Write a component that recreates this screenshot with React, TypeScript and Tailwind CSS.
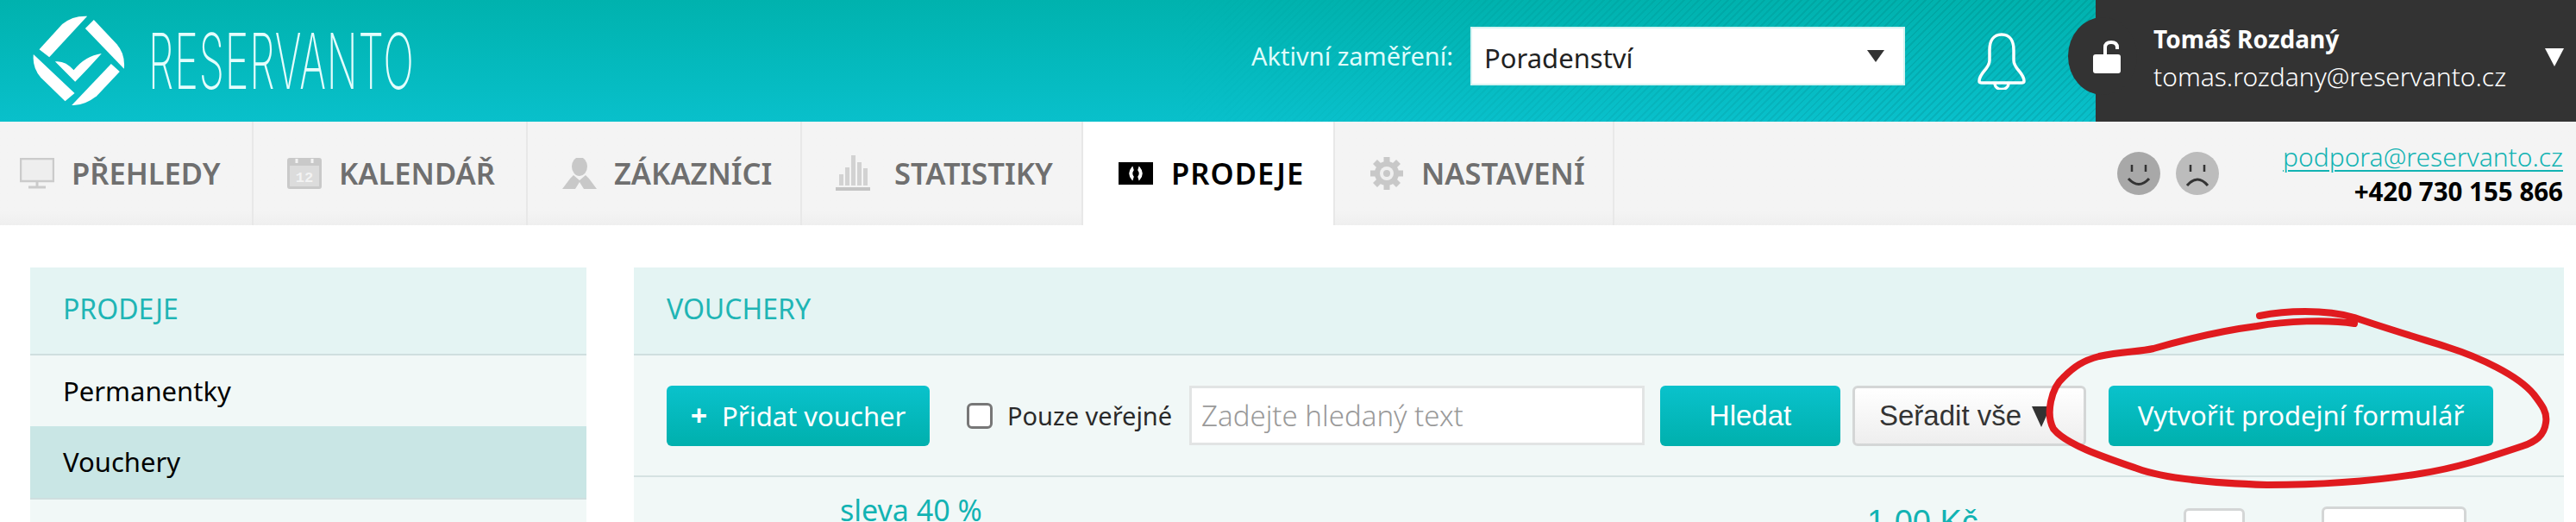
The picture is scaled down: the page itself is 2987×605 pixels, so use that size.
const ubuntu = "font-['Noto_Sans',sans-serif]";

function Logo() {
  return (
    <svg viewBox="113 40 320 315" className="w-[107px] h-[105px] shrink-0" fill="#fff">
      <path d="M135 158 L215 70 Q250 40 302 42 L170 185 Z" />
      <path d="M295 85 L325 55 L405 140 Q435 175 430 225 Z" />
      <path d="M385 208 L415 235 L335 320 Q290 355 248 352 Z" />
      <path d="M115 175 L258 310 L225 338 L140 255 Q110 220 115 175 Z" />
      <path d="M190 200 Q225 195 255 230 Q295 180 352 172 Q300 230 260 270 Z" />
    </svg>
  );
}

function MonitorIcon() {
  return (
    <svg viewBox="0 0 40 36" className="w-[40px] h-[36px]" fill="none">
      <rect x="1" y="1" width="38" height="26" fill="#eeeeee" stroke="#cbcbcb" strokeWidth="2.5" />
      <path d="M20 27v6M10 34h20" stroke="#cbcbcb" strokeWidth="3" />
    </svg>
  );
}

function CalendarIcon() {
  return (
    <svg viewBox="0 0 40 36" className="w-[40px] h-[36px]">
      <rect x="0" y="0" width="40" height="36" rx="3" fill="#c9c9c9" />
      <rect x="3" y="9" width="34" height="24" fill="#dcdcdc" />
      <path d="M11 1v5M29 1v5" stroke="#f3f3f3" strokeWidth="3" />
      <text x="20" y="28" textAnchor="middle" fontSize="17" fontWeight="700" fill="#f3f3f3" fontFamily="Liberation Mono, monospace">12</text>
    </svg>
  );
}

function PersonIcon() {
  return (
    <svg viewBox="0 0 40 36" className="w-[40px] h-[36px]" fill="#c8c8c8">
      <ellipse cx="20" cy="10" rx="9" ry="11" />
      <path d="M13 20 L20 26 L27 20 L31 24 L40 36 H25 L20 28 L15 36 H0 L9 24 Z" />
    </svg>
  );
}

function BarsIcon() {
  return (
    <svg viewBox="0 0 40 42" className="w-[40px] h-[42px]">
      <path d="M4 22h5v13H4zM11 14h5v21h-5zM18 0h5v35h-5zM25 8h5v27h-5zM32 15h5v20h-5z" fill="#d2d2d2" />
      <rect x="0" y="37" width="40" height="4" fill="#c4c4c4" />
    </svg>
  );
}

function MoneyIcon() {
  return (
    <svg viewBox="0 0 40 26" className="w-[40px] h-[26px]">
      <rect width="40" height="26" fill="#000" />
      <path d="M16 6 Q10 13 16 20 L17 17 Q14 13 17 9 Z M24 6 Q30 13 24 20 L23 17 Q26 13 23 9 Z" fill="#fff" stroke="#fff" strokeWidth="1.5" />
    </svg>
  );
}

function GearIcon() {
  return (
    <svg viewBox="0 0 40 40" className="w-[40px] h-[40px]">
      <g stroke="#c8c8c8" strokeWidth="7">
        <path d="M20 1v38M1 20h38M6.5 6.5l27 27M33.5 6.5l-27 27" />
      </g>
      <circle cx="20" cy="20" r="14" fill="#c8c8c8" />
      <circle cx="20" cy="20" r="8" fill="#efefef" />
      <circle cx="20" cy="20" r="4" fill="#c8c8c8" />
    </svg>
  );
}

const tabs = [
  { label: "PŘEHLEDY", icon: <MonitorIcon />, width: "w-[294px]", pad: "pl-[23px]", gap: "gap-[20px]" },
  { label: "KALENDÁŘ", icon: <CalendarIcon />, width: "w-[318px]", pad: "pl-[39px]", gap: "gap-[20px]" },
  { label: "ZÁKAZNÍCI", icon: <PersonIcon />, width: "w-[318px]", pad: "pl-[40px]", gap: "gap-[20px]" },
  { label: "STATISTIKY", icon: <BarsIcon />, width: "w-[326px]", pad: "pl-[39px]", gap: "gap-[28px]" },
  { label: "PRODEJE", icon: <MoneyIcon />, width: "w-[292px]", pad: "pl-[41px]", gap: "gap-[21px]", active: true },
  { label: "NASTAVENÍ", icon: <GearIcon />, width: "w-[324px]", pad: "pl-[40px]", gap: "gap-[20px]" },
];

function Header() {
  return (
    <header className="relative flex h-[141px] items-center bg-gradient-to-b from-[#00b2ae] to-[#09c0cb]">
      <div className="absolute inset-0 bg-[repeating-linear-gradient(135deg,rgba(0,0,0,0.07)_0px,rgba(0,0,0,0.07)_2px,transparent_2px,transparent_6px)] [mask-image:linear-gradient(to_right,transparent_45%,black_75%)]" />
      <div className="relative ml-[38px] flex items-center">
        <Logo />
        <div className="ml-[27px] h-[65px] w-[303px]">
          <span className="inline-block origin-top-left scale-x-[0.526] font-['Inter',sans-serif] text-[89px] leading-[65px] font-extralight tracking-[0.02em] whitespace-nowrap text-[#e4fdfc]">
            RESERVANTO
          </span>
        </div>
      </div>
      <div className="relative ml-auto flex h-full items-center">
        <div className="flex items-center pb-[11px]">
          <span className={`${ubuntu} mr-[20px] text-[29px] text-[#dffcfb] whitespace-nowrap`}>Aktivní zaměření:</span>
          <div className="flex h-[68px] w-[504px] items-center justify-between border-2 border-[#d6f3f2] bg-white pr-[22px] pl-[14px]">
            <span className={`${ubuntu} pt-[4px] text-[31px] text-[#222]`}>Poradenství</span>
            <span className="h-0 w-0 border-x-[10px] border-t-[14px] border-x-transparent border-t-[#333]" />
          </div>
        </div>
        <svg viewBox="0 0 58 66" className="mr-[80px] ml-[83px] h-[66px] w-[58px]" fill="none" stroke="#fff" strokeWidth="3.5">
          <path d="M29 2 C19 2 15 10 15 20 V32 C15 42 3 46 3 56 Q3 58 6 58 H52 Q55 58 55 56 C55 46 43 42 43 32 V20 C43 10 39 2 29 2 Z" />
          <path d="M21 58 C21 68 37 68 37 58" />
        </svg>
        <div className="relative flex h-full w-[557px] items-center bg-[#333333] pl-[67px]">
          <div className="absolute top-[20px] left-[-32px] h-[90px] w-[80px] rounded-[50%] bg-[#333333]" />
          <svg viewBox="0 0 32 38" className="absolute top-[47px] left-[-3px] h-[38px] w-[32px]" fill="none">
            <path d="M14 17 V8 Q14 2 21 2 Q28 2 28 8 V10" stroke="#fff" strokeWidth="4" />
            <rect x="0" y="16" width="32" height="22" rx="3" fill="#fff" />
          </svg>
          <div className={`${ubuntu} relative pb-[8px] text-white`}>
            <div className="text-[28px] leading-[40px] font-bold">Tomáš Rozdaný</div>
            <div className="mt-[4px] text-[30px] leading-[40px] font-light">tomas.rozdany@reservanto.cz</div>
          </div>
          <span className="absolute top-[56px] right-[14px] h-0 w-0 border-x-[11px] border-t-[21px] border-x-transparent border-t-white" />
        </div>
      </div>
    </header>
  );
}

function Nav() {
  return (
    <nav className="flex h-[120px] bg-gradient-to-b from-[#f4f4f4] from-85% to-[#efefef]">
      {tabs.map((tab) => (
        <div
          key={tab.label}
          className={`flex h-full items-center border-r-2 border-[#e8e8e8] ${tab.width} ${tab.pad} ${tab.gap} ${tab.active ? "bg-white" : ""}`}
        >
          <span className="flex w-[40px] shrink-0 justify-center">{tab.icon}</span>
          <span
            className={`${ubuntu} text-[34.5px] font-semibold whitespace-nowrap ${tab.active ? "tracking-[0.03em] text-black" : "text-[#6f6f6f]"}`}
          >
            {tab.label}
          </span>
        </div>
      ))}
      <div className="ml-auto flex items-center pr-[15px]">
        <svg viewBox="0 0 50 50" className="h-[50px] w-[50px]">
          <circle cx="25" cy="25" r="25" fill="#a8a8a8" />
          <path d="M17 15v8M33 15v8" stroke="#333" strokeWidth="2.5" />
          <path d="M13 31 Q25 44 37 31" fill="none" stroke="#333" strokeWidth="3" />
        </svg>
        <svg viewBox="0 0 50 50" className="mr-[74px] ml-[18px] h-[50px] w-[50px]">
          <circle cx="25" cy="25" r="25" fill="#bcbcbc" />
          <path d="M17 15v8M33 15v8" stroke="#333" strokeWidth="2.5" />
          <path d="M13 39 Q25 25 37 39" fill="none" stroke="#333" strokeWidth="3" />
        </svg>
        <div className={`${ubuntu} w-[325px] text-right`}>
          <div className="text-[30px] leading-[42px] font-light text-[#12b3b3] underline decoration-2 underline-offset-[4px]">
            podpora@reservanto.cz
          </div>
          <div className="text-[29.5px] leading-[38px] font-bold text-black">+420 730 155 866</div>
        </div>
      </div>
    </nav>
  );
}

function Sidebar() {
  return (
    <aside className="w-[645px] shrink-0 bg-[#f1f8f7]">
      <div className={`${ubuntu} flex h-[102px] items-center border-b-2 border-[#cfdfdf] bg-[#e4f4f3] pb-[4px] pl-[38px] text-[32px] text-[#1fb5b5]`}>
        PRODEJE
      </div>
      <div className={`${ubuntu} flex h-[82px] items-center pl-[38px] text-[31px] text-black`}>Permanentky</div>
      <div className={`${ubuntu} flex h-[85px] items-center border-b-2 border-[#cfdfdf] bg-[#c9e6e5] pl-[38px] text-[31px] text-black`}>
        Vouchery
      </div>
    </aside>
  );
}

function TealButton({ children, className }: { children: React.ReactNode; className: string }) {
  return (
    <button
      className={`${className} h-[70px] shrink-0 rounded-[6px] bg-gradient-to-b from-[#0ac2cc] to-[#00b0ad] whitespace-nowrap text-white`}
    >
      {children}
    </button>
  );
}

function Content() {
  return (
    <section className="relative ml-[55px] w-[2238px] shrink-0 bg-[#f1f8f7]">
      <div className={`${ubuntu} flex h-[102px] items-center border-b-2 border-[#cfdfdf] bg-[#e4f4f3] pb-[4px] pl-[38px] text-[32px] text-[#1fb5b5]`}>
        VOUCHERY
      </div>
      <div className="flex h-[141px] items-center border-b-2 border-[#d5e2e2] pl-[38px]">
        <TealButton className={`${ubuntu} w-[305px] text-[31px]`}>
          <span className="mr-[17px] text-[34px] font-bold">+</span>Přidat voucher
        </TealButton>
        <span className="ml-[43px] h-[30px] w-[30px] shrink-0 rounded-[6px] border-[3px] border-[#777] bg-white" />
        <span className={`${ubuntu} ml-[17px] w-[190px] text-[29px] whitespace-nowrap text-[#2a2a2a]`}>Pouze veřejné</span>
        <div className={`${ubuntu} ml-[21px] flex h-[69px] w-[528px] items-center border-[3px] border-[#e2e4e4] bg-white pl-[11px] text-[33px] font-light text-[#9a9a9a]`}>
          Zadejte hledaný text
        </div>
        <TealButton className="ml-[18px] w-[209px] font-['Liberation_Sans',sans-serif] text-[33px]">Hledat</TealButton>
        <div className="ml-[14px] flex h-[70px] w-[271px] shrink-0 items-center rounded-[6px] border-[3px] border-[#d4d6d6] bg-gradient-to-b from-white to-[#eeeeee] pl-[28px] font-['Liberation_Sans',sans-serif] text-[33px] whitespace-nowrap text-[#333]">
          Seřadit vše
          <span className="mt-[3px] ml-[12px] h-0 w-0 border-x-[11px] border-t-[24px] border-x-transparent border-t-[#333]" />
        </div>
        <TealButton className={`${ubuntu} ml-[26px] w-[446px] text-[31px]`}>Vytvořit prodejní formulář</TealButton>
      </div>
      <div className="relative flex h-[52px]">
        <span className={`${ubuntu} mt-[18px] ml-[239px] w-[1191px] shrink-0 text-[34px] leading-[40px] text-[#12b3b3]`}>sleva 40 %</span>
        <span className="mt-[32px] w-[367px] shrink-0 font-['Liberation_Sans',sans-serif] text-[38px] leading-[40px] text-[#12b3b3]">1,00 Kč</span>
        <span className="mt-[36px] h-[40px] w-[71px] shrink-0 rounded-[6px] border-[3px] border-[#d4d6d6] bg-white" />
        <span className="mt-[34px] ml-[89px] h-[40px] w-[168px] shrink-0 rounded-[6px] border-[3px] border-[#d4d6d6] bg-white" />
      </div>
    </section>
  );
}

function RedCircle() {
  return (
    <svg viewBox="0 0 2987 605" className="pointer-events-none absolute top-0 left-0 h-[605px] w-[2987px]" fill="none">
      <path
        d="M2620 366 C2650 360 2695 358 2730 368 C2765 380 2805 392 2837 402 C2875 414 2920 435 2938 457 C2948 470 2954 478 2952 490 C2950 505 2940 512 2925 517 C2880 532 2850 542 2806 549 C2750 558 2690 562 2629 562 C2570 560 2510 555 2478 543 C2440 530 2395 515 2381 497 C2372 480 2378 450 2393 437 C2405 425 2415 418 2434 413 C2460 407 2480 408 2497 404 C2525 396 2570 384 2617 378 C2650 372 2700 370 2730 375"
        stroke="#e01b1f"
        strokeWidth="8"
        strokeLinecap="round"
      />
    </svg>
  );
}

export default function App() {
  return (
    <div className="relative h-[605px] w-[2987px] overflow-hidden bg-white">
      <Header />
      <Nav />
      <main className="flex pt-[49px] pl-[35px]">
        <Sidebar />
        <Content />
      </main>
      <RedCircle />
    </div>
  );
}
